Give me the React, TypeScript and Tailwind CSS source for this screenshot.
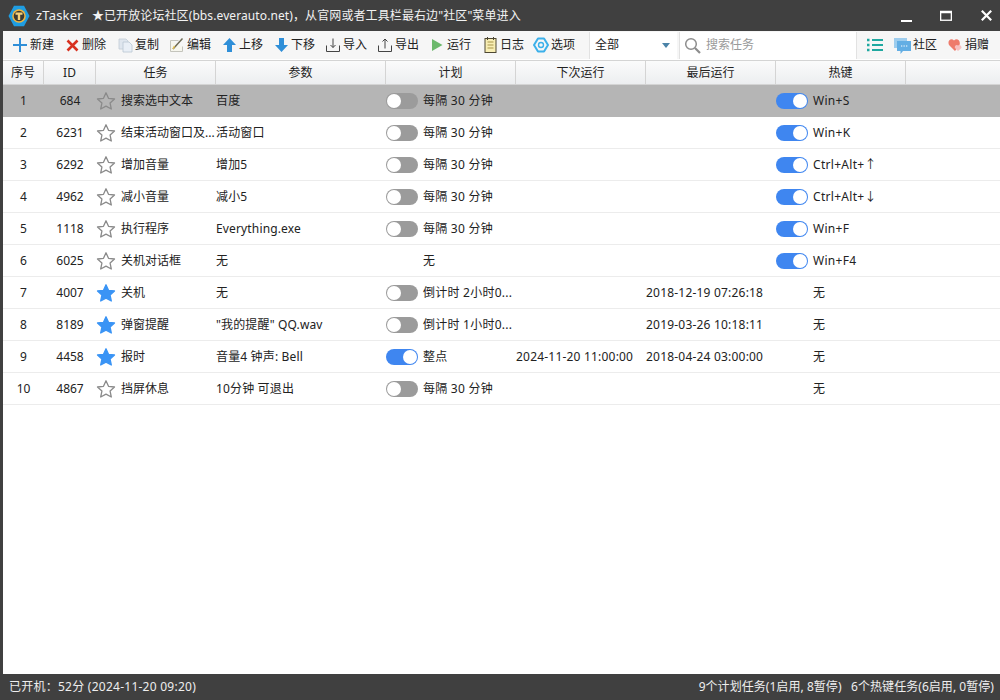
import React from "react";

const font = { fontFamily: '"Noto Sans","Noto Sans CJK SC",sans-serif' };

function Star({ on }: { on: boolean }) {
  return (
    <svg width="20" height="20" viewBox="0 0 20 20" className="shrink-0">
      <path
        d="M10 1.800l2.500 5.500 6 .7-4.400 4.100 1.200 5.900L10 15.100 4.700 18l1.200-5.900L1.500 8l6-.7z"
        fill={on ? "#3a94f5" : "none"}
        stroke={on ? "#3a94f5" : "#8a8a8a"}
        strokeWidth="1.300"
        strokeLinejoin="round"
      />
    </svg>
  );
}

function Toggle({ on }: { on: boolean }) {
  return (
    <span className={`flex h-4 w-8 shrink-0 items-center rounded-full ${on ? "justify-end bg-[#3f86f0]" : "justify-start bg-[#9b9b9b]"}`}>
      <span className="mx-px h-[14px] w-[14px] rounded-full bg-white" />
    </span>
  );
}

type Row = { n: number; id: number; name: string; param: string; star?: boolean; plan: string; planToggle?: boolean; planOn?: boolean; next?: string; last?: string; key: string; keyToggle?: boolean };

const rows: Row[] = [
  { n: 1, id: 684, name: "搜索选中文本", param: "百度", plan: "每隔 30 分钟", planToggle: true, key: "Win+S", keyToggle: true },
  { n: 2, id: 6231, name: "结束活动窗口及...", param: "活动窗口", plan: "每隔 30 分钟", planToggle: true, key: "Win+K", keyToggle: true },
  { n: 3, id: 6292, name: "增加音量", param: "增加5", plan: "每隔 30 分钟", planToggle: true, key: "Ctrl+Alt+↑", keyToggle: true },
  { n: 4, id: 4962, name: "减小音量", param: "减小5", plan: "每隔 30 分钟", planToggle: true, key: "Ctrl+Alt+↓", keyToggle: true },
  { n: 5, id: 1118, name: "执行程序", param: "Everything.exe", plan: "每隔 30 分钟", planToggle: true, key: "Win+F", keyToggle: true },
  { n: 6, id: 6025, name: "关机对话框", param: "无", plan: "无", key: "Win+F4", keyToggle: true },
  { n: 7, id: 4007, name: "关机", param: "无", star: true, plan: "倒计时 2小时0...", planToggle: true, last: "2018-12-19 07:26:18", key: "无" },
  { n: 8, id: 8189, name: "弹窗提醒", param: "\"我的提醒\" QQ.wav", star: true, plan: "倒计时 1小时0...", planToggle: true, last: "2019-03-26 10:18:11", key: "无" },
  { n: 9, id: 4458, name: "报时", param: "音量4 钟声: Bell", star: true, plan: "整点", planToggle: true, planOn: true, next: "2024-11-20 11:00:00", last: "2018-04-24 03:00:00", key: "无" },
  { n: 10, id: 4867, name: "挡屏休息", param: "10分钟 可退出", plan: "每隔 30 分钟", planToggle: true, key: "无" },
];

function Tool({ icon, label, w }: { icon: React.ReactNode; label: string; w: string }) {
  return (
    <div className={`flex h-full shrink-0 items-center ${w}`}>
      <span className="flex h-4 w-[18px] shrink-0 items-center justify-center">{icon}</span>
      <span className="ml-px whitespace-nowrap">{label}</span>
    </div>
  );
}

const icons = {
  plus: <svg width="14" height="14" viewBox="0 0 14 14"><path d="M7 0v14M0 7h14" stroke="#2f8fd8" strokeWidth="2" /></svg>,
  x: <svg width="13" height="13" viewBox="0 0 13 13"><path d="M1.500 1.500l10 10M11.500 1.500l-10 10" stroke="#d8301f" strokeWidth="2.600" /></svg>,
  copy: (
    <svg width="15" height="15" viewBox="0 0 15 15">
      <path d="M1 1h7l2 2v8H1z" fill="#dfe6ee" stroke="#c2ccd6" strokeWidth="0.800" />
      <path d="M5 4h6l3 3v7H5z" fill="#e9eff6" stroke="#b9c6d3" strokeWidth="0.800" />
    </svg>
  ),
  edit: (
    <svg width="16" height="16" viewBox="0 0 16 16">
      <path d="M1.500 3.500h8M1.500 3.500v11h12v-5" fill="#f6f6ee" stroke="#c4c4bc" />
      <path d="M4 12L13.500 1.500" stroke="#6d6a55" strokeWidth="1.500" />
      <path d="M4 12l1.500-3" stroke="#e2bf55" strokeWidth="1.500" />
    </svg>
  ),
  up: <svg width="13" height="14" viewBox="0 0 13 14"><path d="M6.500 0L13 7H9v7H4V7H0z" fill="#2f8fd8" /></svg>,
  down: <svg width="13" height="14" viewBox="0 0 13 14"><path d="M6.500 14L13 7H9V0H4v7H0z" fill="#2f8fd8" /></svg>,
  imp: <svg width="14" height="14" viewBox="0 0 14 14" fill="none" stroke="#444" strokeWidth="1"><path d="M.5 7.500v6h13v-6M7 .5v9M4.500 7L7 9.500 9.500 7" /></svg>,
  exp: <svg width="14" height="14" viewBox="0 0 14 14" fill="none" stroke="#444" strokeWidth="1"><path d="M.5 7.500v6h13v-6M7 10.500V1M4.500 3.500L7 1l2.500 2.500" /></svg>,
  run: <svg width="12" height="14" viewBox="0 0 12 14"><path d="M1 1l10.500 6L1 13z" fill="#6cb96c" /></svg>,
  log: (
    <svg width="13" height="16" viewBox="0 0 13 16">
      <rect x="1" y="1.500" width="11" height="14" fill="#f8eeb4" stroke="#4d4733" />
      <path d="M3.500 5h6M3.500 8h6M3.500 11h6" stroke="#a8954a" />
      <path d="M3.500 0v3M9.500 0v3" stroke="#4d4733" />
    </svg>
  ),
  opt: (
    <svg width="16" height="16" viewBox="0 0 16 16">
      <path d="M5 1.500h6L15 8l-4 6.500H5L1 8z" fill="none" stroke="#3bb0ea" strokeWidth="2" strokeLinejoin="round" />
      <circle cx="8" cy="8" r="2.500" fill="none" stroke="#3bb0ea" strokeWidth="1.400" />
    </svg>
  ),
};

const header = [
  ["序号", "w-[41px]"],
  ["ID", "w-[52px]"],
  ["任务", "w-[120px]"],
  ["参数", "w-[170px]"],
  ["计划", "w-[130px]"],
  ["下次运行", "w-[130px]"],
  ["最后运行", "w-[130px]"],
  ["热键", "w-[130px]"],
];

export default function App() {
  return (
    <div className="flex h-[700px] w-[1000px] flex-col overflow-hidden bg-white text-[12px] text-[#222]" style={font}>
      {/* title bar */}
      <div className="flex h-[31px] shrink-0 items-center bg-[#404040] text-[#f2f2f2]">
        <svg width="22" height="22" viewBox="0 0 22 22" className="ml-2 shrink-0">
          <path d="M6 .8h10l5.500 10.200L16 21.200H6L.5 11z" fill="#1f9de2" />
          <circle cx="11" cy="11" r="6.800" fill="#f0b640" />
          <circle cx="11" cy="11" r="5.300" fill="#3e3a30" />
          <path d="M7.500 7.500h7v2.200h-2.300V15H9.800V9.700H7.500z" fill="#f6d27a" />
        </svg>
        <span className="ml-[6px] text-[13px] tracking-[0.2px]">zTasker</span>
        <span className="ml-[9px] whitespace-nowrap tracking-[0.1px]">★已开放论坛社区(bbs.everauto.net)，从官网或者工具栏最右边"社区"菜单进入</span>
        <div className="ml-auto flex items-center">
          <svg width="12" height="12" viewBox="0 0 12 12" className="mr-[27px]"><path d="M0 11h11" stroke="#fff" strokeWidth="2" /></svg>
          <svg width="12" height="12" viewBox="0 0 12 12" className="mr-[29px]"><rect x=".65" y="1.750" width="10.700" height="8.500" fill="none" stroke="#fff" strokeWidth="1.300" /><path d="M0 2h12" stroke="#fff" strokeWidth="2.500" /></svg>
          <svg width="11" height="11" viewBox="0 0 11 11" className="mr-[8px]"><path d="M.8.8l9.400 9.400M10.200.8L.8 10.200" stroke="#fff" strokeWidth="2.200" /></svg>
        </div>
      </div>

      <div className="flex min-h-0 flex-1 border-l-[3px] border-[#404040]">
        <div className="flex min-w-0 flex-1 flex-col">
          {/* toolbar */}
          <div className="flex h-[28px] shrink-0 items-center bg-[#f6f6f6] pl-[8px]">
            <Tool icon={icons.plus} label="新建" w="w-[52px]" />
            <Tool icon={icons.x} label="删除" w="w-[53px]" />
            <Tool icon={icons.copy} label="复制" w="w-[52px]" />
            <Tool icon={icons.edit} label="编辑" w="w-[52px]" />
            <Tool icon={icons.up} label="上移" w="w-[52px]" />
            <Tool icon={icons.down} label="下移" w="w-[52px]" />
            <Tool icon={icons.imp} label="导入" w="w-[52px]" />
            <Tool icon={icons.exp} label="导出" w="w-[52px]" />
            <Tool icon={icons.run} label="运行" w="w-[53px]" />
            <Tool icon={icons.log} label="日志" w="w-[51px]" />
            <Tool icon={icons.opt} label="选项" w="w-[57px]" />
            <div className="flex h-[27px] w-[88px] shrink-0 items-center justify-between border-l border-[#e2e2e2] bg-white pl-[5px] pr-[7px]">
              <span>全部</span>
              <svg width="8" height="5" viewBox="0 0 8 5"><path d="M0 0h8L4 5z" fill="#4b83a8" /></svg>
            </div>
            <div className="ml-[2px] flex h-[27px] w-[178px] shrink-0 items-center border-l border-r border-[#e2e2e2] bg-white pl-[4px] text-[#9a9a9a]">
              <svg width="17" height="17" viewBox="0 0 17 17" fill="none" stroke="#8d8d8d">
                <circle cx="7" cy="7" r="5.300" strokeWidth="1.500" />
                <path d="M11 11l5 5" strokeWidth="2.200" />
              </svg>
              <span className="ml-[5px]">搜索任务</span>
            </div>
            <span className="ml-[10px] flex w-[16px] shrink-0">
              <svg width="16" height="14" viewBox="0 0 16 14">
                <path d="M0 2h2.500M0 7h2.500M0 12h2.500" stroke="#1fa8a0" strokeWidth="2.500" />
                <path d="M5 2h11M5 7h11M5 12h11" stroke="#1fa8a0" strokeWidth="2" />
              </svg>
            </span>
            <span className="ml-[11px] flex shrink-0 items-center">
              <svg width="17" height="17" viewBox="0 0 17 17">
                <rect x="0" y="1" width="13" height="10" fill="#9ecdee" />
                <path d="M3 4h14v10h-8l-2.500 3v-3H3z" fill="#63aee4" />
                <path d="M7 9h1.300M9.500 9h1.300M12 9h1.300" stroke="#fff" />
              </svg>
              <span className="ml-[2px]">社区</span>
            </span>
            <span className="ml-[11px] flex shrink-0 items-center">
              <svg width="15" height="14" viewBox="0 0 15 14">
                <path d="M7 13L1 7C-1 3 3-.5 6 2.500 9-.5 13 3 11.500 7z" fill="#ee7b6c" />
                <path d="M10 13L7 10c-1-2 1.500-4 3-2.500 1.500-1.500 4 .5 3.500 2.500z" fill="#f7c0c0" />
              </svg>
              <span className="ml-[2px]">捐赠</span>
            </span>
          </div>

          {/* header */}
          <div className="mt-px flex h-[25px] shrink-0 border-y border-[#d4d4d4] bg-gradient-to-b from-[#fbfbfb] to-[#eceef0]">
            {header.map(([t, w]) => (
              <div key={t} className={`flex shrink-0 items-center justify-center border-r border-[#d4d4d4] ${w}`}>{t}</div>
            ))}
          </div>

          {/* rows */}
          <div className="min-h-0 flex-1">
            {rows.map((r, i) => (
              <div key={r.n} className={`flex h-[32px] items-center border-b ${i === 0 ? "border-[#b5b5b5] bg-[#b5b5b5]" : "border-[#ececec]"}`}>
                <div className="w-[41px] shrink-0 text-center">{r.n}</div>
                <div className="w-[52px] shrink-0 text-center">{r.id}</div>
                <div className="flex w-[120px] shrink-0 items-center whitespace-nowrap">
                  <Star on={!!r.star} />
                  <span className="ml-[5px]">{r.name}</span>
                </div>
                <div className="w-[170px] shrink-0 whitespace-nowrap tracking-[0.15px]">{r.param}</div>
                <div className="flex w-[130px] shrink-0 items-center whitespace-nowrap tracking-[0.25px]">
                  {r.planToggle ? <Toggle on={!!r.planOn} /> : <span className="w-8" />}
                  <span className="ml-[5px]">{r.plan}</span>
                </div>
                <div className="w-[130px] shrink-0 whitespace-nowrap tracking-[0.2px]">{r.next}</div>
                <div className="w-[130px] shrink-0 whitespace-nowrap tracking-[0.2px]">{r.last}</div>
                <div className="flex w-[130px] shrink-0 items-center whitespace-nowrap tracking-[0.3px]">
                  {r.keyToggle ? <Toggle on /> : <span className="w-8" />}
                  <span className="ml-[5px]">{r.key}</span>
                </div>
              </div>
            ))}
          </div>
        </div>
      </div>

      {/* status bar */}
      <div className="flex h-[26px] shrink-0 items-center justify-between bg-[#404040] pl-[9px] pr-[6px] text-[#eeeeee]">
        <span className="tracking-[0.25px]">已开机：52分 (2024-11-20 09:20)</span>
        <span className="whitespace-nowrap tracking-[0.05px]">9个计划任务(1启用, 8暂停)&nbsp;&nbsp;&nbsp;6个热键任务(6启用, 0暂停)</span>
      </div>
    </div>
  );
}
